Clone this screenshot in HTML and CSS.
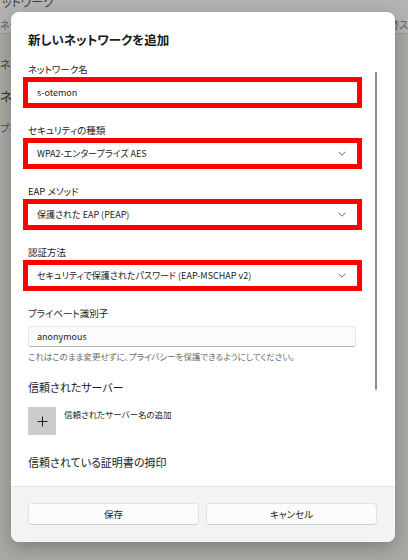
FILE: index.html
```html
<!DOCTYPE html>
<html lang="ja">
<head>
    <meta charset="UTF-8">
    <meta name="viewport" content="width=device-width, initial-scale=1.0">
    <title>新しいネットワークを追加</title>
    <link rel="stylesheet" href="styles.css">
</head>
<body>
    <!-- Dimmed settings window behind the dialog -->
    <div class="backdrop">
        <div class="backdrop-top">
            <span class="bd-title">ットワーク</span>
            <div class="bd-tabs">
                <span>ネッ|</span>
                <span>替ス</span>
            </div>
        </div>
        <div class="bd-list">
            <p class="bd-item">ネッ</p>
            <p class="bd-item bd-strong">ネットワ</p>
            <p class="bd-item bd-link">プを</p>
        </div>
    </div>

    <!-- Dialog -->
    <div class="dialog">
        <div class="dialog-body">
            <h1 class="dialog-title">新しいネットワークを追加</h1>

            <div class="group">
                <label class="label">ネットワーク名</label>
                <div class="field marked">s-otemon</div>
            </div>

            <div class="group">
                <label class="label">セキュリティの種類</label>
                <div class="field select marked">
                    <span>WPA2-エンタープライズ AES</span>
                    <svg class="chevron" width="8" height="5" viewBox="0 0 8 5"><path d="M0.5 0.7 L4 4.2 L7.5 0.7" fill="none" stroke="#666" stroke-width="1"/></svg>
                </div>
            </div>

            <div class="group">
                <label class="label">EAP メソッド</label>
                <div class="field select marked">
                    <span>保護された EAP (PEAP)</span>
                    <svg class="chevron" width="8" height="5" viewBox="0 0 8 5"><path d="M0.5 0.7 L4 4.2 L7.5 0.7" fill="none" stroke="#666" stroke-width="1"/></svg>
                </div>
            </div>

            <div class="group">
                <label class="label">認証方法</label>
                <div class="field select marked">
                    <span>セキュリティで保護されたパスワード (EAP-MSCHAP v2)</span>
                    <svg class="chevron" width="8" height="5" viewBox="0 0 8 5"><path d="M0.5 0.7 L4 4.2 L7.5 0.7" fill="none" stroke="#666" stroke-width="1"/></svg>
                </div>
            </div>

            <div class="group">
                <label class="label">プライベート識別子</label>
                <div class="field plain">anonymous</div>
                <p class="help">これはこのまま変更せずに、プライバシーを保護できるようにしてください。</p>
            </div>

            <h2 class="section">信頼されたサーバー</h2>
            <div class="add-row">
                <div class="add-button">
                    <svg width="11" height="11" viewBox="0 0 11 11"><path d="M5.5 0.5 V10.5 M0.5 5.5 H10.5" stroke="#222" stroke-width="1"/></svg>
                </div>
                <span class="add-label">信頼されたサーバー名の追加</span>
            </div>

            <h2 class="section last">信頼されている証明書の拇印</h2>

            <div class="scrollbar"></div>
        </div>

        <div class="dialog-footer">
            <button class="btn">保存</button>
            <button class="btn">キャンセル</button>
        </div>
    </div>
</body>
</html>
```

FILE: styles.css
```css
* {
    margin: 0;
    padding: 0;
    box-sizing: border-box;
}

body {
    width: 408px;
    height: 560px;
    overflow: hidden;
    position: relative;
    background-color: #a8a7a2;
    font-family: "Noto Sans CJK JP", "Noto Sans", sans-serif;
    font-feature-settings: "palt";
    color: #1b1b1b;
}

/* Backdrop */
.backdrop {
    height: 100%;
    background-color: #a9a9a6;
    color: #3e3e3e;
    font-size: 11px;
}

.backdrop-top {
    display: flow-root;
    height: 34px;
    background-color: #b3b3b1;
    border-bottom: 1px solid #9b9b99;
}

.bd-title {
    display: block;
    font-size: 12px;
    line-height: 12px;
    margin-top: -4px;
    padding-left: 2px;
}

.bd-tabs {
    display: flex;
    justify-content: space-between;
    padding-top: 9px;
    font-size: 10px;
    color: #5a5a5a;
}

.bd-list {
    padding-top: 22px;
}

.bd-item {
    font-size: 11px;
    line-height: 16px;
    margin-bottom: 16px;
}

.bd-strong {
    font-size: 13px;
    color: #333;
}

.bd-link {
    color: #3b4f86;
    font-size: 10px;
    margin-top: 10px;
}

/* Dialog */
.dialog {
    position: absolute;
    left: 11px;
    top: 12px;
    width: 384px;
    height: 530px;
    background-color: #ffffff;
    border-radius: 8px;
    overflow: hidden;
    box-shadow: 0 6px 18px rgba(0, 0, 0, 0.25);
    display: flex;
    flex-direction: column;
}

.dialog-body {
    position: relative;
    height: 474px;
    padding: 18px 38px 0 17px;
}

.dialog-title {
    font-size: 12.5px;
    font-weight: 700;
    line-height: 20px;
    margin-bottom: 12px;
}

.group {
    display: flex;
    flex-direction: column;
    margin-bottom: 20px;
}

.label {
    font-size: 9.5px;
    line-height: 14px;
    margin-bottom: 6px;
}

.field {
    height: 21px;
    display: flex;
    align-items: center;
    padding: 0 9px;
    font-size: 9px;
    background-color: #ffffff;
}

.field.marked {
    outline: 5px solid #ff0000;
}

.field.select {
    justify-content: space-between;
    padding-right: 11px;
}

.field.plain {
    border: 1px solid #e6e6e6;
    border-bottom-color: #b5b5b5;
    border-radius: 3px;
    background-color: #fbfbfb;
    padding-left: 8px;
    width: 328px;
}

.chevron {
    flex-shrink: 0;
}

.help {
    font-size: 8.5px;
    line-height: 14px;
    margin-top: 2px;
    color: #6b6b6b;
}

.group:has(.help) {
    margin-bottom: 15px;
}

.section {
    font-size: 11px;
    font-weight: 400;
    line-height: 18px;
}

.add-row {
    display: flex;
    align-items: flex-start;
    gap: 8px;
    margin-top: 11px;
    margin-bottom: 18px;
}

.add-button {
    width: 28px;
    height: 28px;
    background-color: #cccccc;
    display: flex;
    align-items: center;
    justify-content: center;
}

.add-label {
    font-size: 8.5px;
    line-height: 14px;
}

.scrollbar {
    position: absolute;
    left: 364px;
    top: 60px;
    width: 2px;
    height: 318px;
    background-color: #8c8c8c;
    border-radius: 1px;
}

/* Footer */
.dialog-footer {
    flex: 1;
    background-color: #f3f3f3;
    border-top: 1px solid #e3e3e3;
    display: flex;
    gap: 7px;
    padding: 16px 18px 0 17px;
}

.btn {
    flex: 1;
    height: 22px;
    background-color: #fbfbfb;
    border: 1px solid #e2e2e2;
    border-bottom-color: #cfcfcf;
    border-radius: 4px;
    font-family: inherit;
    font-feature-settings: "palt";
    font-size: 9.5px;
    color: #1b1b1b;
}
```
